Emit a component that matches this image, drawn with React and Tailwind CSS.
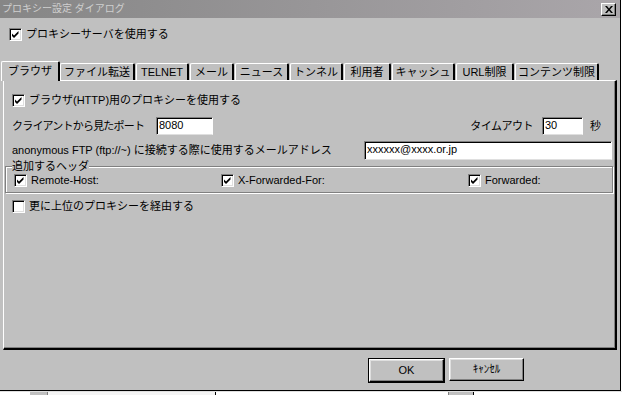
import React from 'react';

const font = { fontFamily: '"Liberation Sans", "Noto Sans CJK JP", sans-serif' };

function Check({ checked }) {
  return (
    <span className="w-[13px] h-[13px] shrink-0 bg-white border border-t-[#808080] border-l-[#808080] border-r-white border-b-white shadow-[inset_1px_1px_0_#000,inset_-1px_-1px_0_#dfdfdf] flex items-center justify-center">
      {checked && (
        <svg width="9" height="9" viewBox="0 0 9 9">
          <path d="M1 3.5 L3 5.5 L7.5 1 L7.5 3.5 L3 8 L1 6 Z" fill="#000" />
        </svg>
      )}
    </span>
  );
}

function CheckRow({ checked, label, className = '' }) {
  return (
    <div className={`flex items-center gap-[4px] h-[13px] leading-[13px] ${className}`}>
      <Check checked={checked} />
      <span className="whitespace-nowrap">{label}</span>
    </div>
  );
}

function Field({ value, className = '' }) {
  return (
    <div className={`bg-white border border-t-[#808080] border-l-[#808080] border-r-white border-b-[#dfdfdf] shadow-[inset_1px_1px_0_#000] pl-[2px] leading-[15px] text-black ${className}`}>
      {value}
    </div>
  );
}

function Button({ children, isDefault }) {
  return (
    <div className={isDefault ? 'border border-black' : ''}>
      <div className="w-[75px] h-[23px] flex items-center justify-center border border-t-white border-l-white border-r-black border-b-black shadow-[inset_-1px_-1px_0_#808080,inset_1px_1px_0_#dfdfdf]">
        {children}
      </div>
    </div>
  );
}

const tabs = [
  ['ファイル転送', 76],
  ['TELNET', 54],
  ['メール', 45],
  ['ニュース', 55],
  ['トンネル', 54],
  ['利用者', 48],
  ['キャッシュ', 64],
  ['URL制限', 59],
  ['コンテンツ制限', 85],
];

export default function App() {
  return (
    <div className="w-[622px] h-[396px] bg-white overflow-hidden text-[11px] text-black" style={font}>
      <div className="w-[621px] h-[391px] bg-[#c0c0c0] flex flex-col border-r border-b border-black">
        {/* title bar */}
        <div className="h-[18px] shrink-0 flex items-center justify-between bg-gradient-to-r from-[#868686] to-[#aaa6aa] pl-[2px] pr-[4px]">
          <span className="text-[10px] text-[#cfcfcf] leading-[12px]">プロキシー設定 ダイアログ</span>
          <div className="w-[15px] h-[13px] bg-[#c0c0c0] flex items-center justify-center border border-t-white border-l-white border-r-black border-b-black shadow-[inset_-1px_-1px_0_#808080]">
            <svg width="8" height="7" viewBox="0 0 8 7">
              <path d="M0 0 L2 0 L4 2.5 L6 0 L8 0 L5 3.5 L8 7 L6 7 L4 4.5 L2 7 L0 7 L3 3.5 Z" fill="#000" />
            </svg>
          </div>
        </div>

        <CheckRow checked label="プロキシーサーバを使用する" className="mt-[10px] ml-[9px]" />

        {/* tabs */}
        <div className="mt-[20px] ml-[1px] h-[19px] flex items-end relative z-10">
          <div className="w-[59px] h-[20px] -mb-[1px] bg-[#c0c0c0] border-t border-l border-white border-r-2 border-r-black rounded-t-[2px] flex items-center justify-center pb-[1px]">
            ブラウザ
          </div>
          {tabs.map(([name, w]) => (
            <div
              key={name}
              className="h-[17px] shrink-0 flex"
              style={{ width: w }}
            >
              <div className="flex-1 mr-[1px] border-t border-l border-white border-r-2 border-r-black rounded-t-[2px] flex items-center justify-center whitespace-nowrap">
                {name}
              </div>
            </div>
          ))}
        </div>

        {/* panel */}
        <div className="ml-[3px] w-[614px] h-[270px] shrink-0 flex flex-col border-t border-l border-white border-r-2 border-b-2 border-r-black border-b-black shadow-[inset_-1px_-1px_0_#808080]">
          <CheckRow checked label="ブラウザ(HTTP)用のプロキシーを使用する" className="mt-[13px] ml-[8px]" />

          <div className="mt-[10px] ml-[8px] flex items-center h-[18px]">
            <span className="w-[144px] whitespace-nowrap tracking-[-0.8px]">クライアントから見たポート</span>
            <Field value="8080" className="w-[57px] h-[18px]" />
            <span className="ml-auto whitespace-nowrap tracking-[-0.5px]">タイムアウト</span>
            <Field value="30" className="ml-[9px] w-[41px] h-[18px]" />
            <span className="ml-[7px] mr-[14px]">秒</span>
          </div>

          <div className="mt-[6px] ml-[8px] flex items-center h-[19px]">
            <span className="w-[352px] whitespace-nowrap">anonymous FTP (ftp://~) に接続する際に使用するメールアドレス</span>
            <Field value="xxxxxx@xxxx.or.jp" className="w-[248px] h-[19px]" />
          </div>

          <fieldset className="ml-[1px] w-[608px] border border-[#808080] shadow-[1px_1px_0_#fff,inset_1px_1px_0_#fff] pb-[5px]">
            <legend className="ml-[6px] bg-[#c0c0c0] leading-[13px] px-0">追加するヘッダ</legend>
            <div className="mt-[1px] ml-[8px] flex">
              <CheckRow checked label="Remote-Host:" className="w-[207px]" />
              <CheckRow checked label="X-Forwarded-For:" className="w-[247px]" />
              <CheckRow checked label="Forwarded:" />
            </div>
          </fieldset>

          <CheckRow label="更に上位のプロキシーを経由する" className="mt-[7px] ml-[8px]" />
        </div>

        {/* buttons */}
        <div className="mt-[8px] ml-[368px] flex items-start gap-[4px]">
          <Button isDefault>OK</Button>
          <Button>ｷｬﾝｾﾙ</Button>
        </div>
      </div>

      {/* window behind */}
      <div className="h-[4px] flex border-t border-[#dfdfdf]">
        <div className="w-[30px] bg-white" />
        <div className="w-[18px] bg-[#c0c0c0] border-r border-[#808080]" />
        <div className="w-[168px] bg-[#f4f4f4] border-r border-black" />
        <div className="w-[233px] bg-white border-r border-[#808080]" />
        <div className="w-[25px] bg-[#c0c0c0] border-r border-black" />
        <div className="flex-1 bg-white" />
      </div>
    </div>
  );
}
